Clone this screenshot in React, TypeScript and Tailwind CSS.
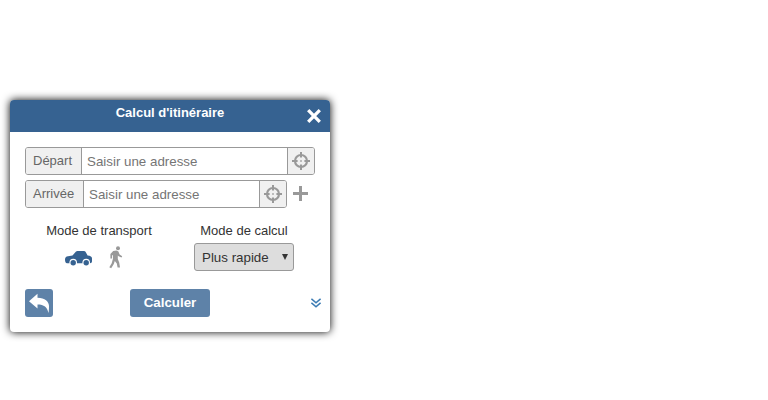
import React from 'react';

function Target() {
  return (
    <svg width="18" height="18" viewBox="0 0 18 18" fill="none" stroke="#999" strokeWidth="2">
      <circle cx="9" cy="9" r="6" strokeWidth="2.2" />
      <path d="M9 0v5.6M9 12.4v5.6M0 9h5.6M12.4 9h5.6" />
      <path d="M8.2 9h1.6" strokeWidth="1.6" />
    </svg>
  );
}

function AddressField({ label, labelClass, inputClass }: { label: string; labelClass: string; inputClass: string }) {
  return (
    <div className="flex h-7 overflow-hidden rounded-[3px] border border-[#999] bg-white">
      <label className={`border-r border-[#999] bg-[#f0f0f0] pl-[7px] leading-[25px] text-[#666] ${labelClass}`}>{label}</label>
      <input
        placeholder="Saisir une adresse"
        className={`min-w-0 pt-px text-[13.33px] outline-none placeholder:text-[#757575] ${inputClass}`}
      />
      <button className="flex w-[27px] shrink-0 items-center justify-center border-l border-[#999] bg-[#f0f0f0]">
        <Target />
      </button>
    </div>
  );
}

function Car() {
  return (
    <svg width="27" height="17" viewBox="0 0 27 17">
      <path
        d="M0 9.5Q0 6.6 3 6.2L7.5 5.6L11 1.4Q11.4 1 12.4 1H19Q20 1 20.5 1.8L22.6 5.6Q27 6 27 8.6V11.4Q27 13.2 25 13.2H2Q0 13.2 0 9.5Z"
        fill="#366291"
      />
      <circle cx="8.2" cy="12.6" r="3.8" fill="#fff" />
      <circle cx="21.2" cy="12.6" r="3.8" fill="#fff" />
      <circle cx="8.2" cy="12.8" r="2.7" fill="#366291" />
      <circle cx="21.2" cy="12.8" r="2.7" fill="#366291" />
    </svg>
  );
}

function Walker() {
  return (
    <svg width="14" height="23" viewBox="0 0 14 23">
      <circle cx="9" cy="2.3" r="2" fill="#999" />
      <path
        d="M4.2 5L7.5 4.4L9.4 5.6L10.6 8.6L13.2 10.2L12.5 11.6L9.6 10.2L8.8 9.4V13L10.2 16.5L11 21.6H8.6L7.8 17.6L5.8 15L4.8 18L2.2 22.2L.3 21.2L2.7 17.2L4 12.5V9L3.1 9.6V12.4H1.4V8Z"
        fill="#999"
      />
    </svg>
  );
}

export default function App() {
  return (
    <main className="h-[400px] bg-white pt-[100px] pl-2.5 font-['Liberation_Sans',Arial,sans-serif] text-[13px] text-[#333]">
      <section className="h-[232px] w-80 rounded-[4px] bg-white shadow-[0_0_8px_#000]">
        <header className="grid h-8 grid-cols-[32px_1fr_32px] rounded-t-[4px] bg-[#366291]">
          <h1 className="col-start-2 pt-px text-center leading-6 font-bold text-white">Calcul d'itinéraire</h1>
          <button className="flex items-center justify-center">
            <svg width="14" height="14" viewBox="0 0 14 14" stroke="#fff" strokeWidth="3.3">
              <path d="M1.2 1.2L12.8 12.8M12.8 1.2L1.2 12.8" />
            </svg>
          </button>
        </header>
        <div className="flex flex-col gap-[5px] px-[15px] pt-[15px]">
          <AddressField label="Départ" labelClass="w-14" inputClass="flex-1 pl-[5px]" />
          <div className="flex">
            <AddressField label="Arrivée" labelClass="w-[58px]" inputClass="w-[175px] pl-[5px]" />
            <button className="flex w-7 items-start pt-1.5 pl-1.5">
              <svg width="15" height="15" viewBox="0 0 15 15" stroke="#999" strokeWidth="3">
                <path d="M7.5 0V15M0 7.5H15" />
              </svg>
            </button>
          </div>
        </div>
        <div className="flex pt-[15px] pl-[15px]">
          <div className="w-[148px] text-center">
            <div className="leading-4">Mode de transport</div>
            <div className="flex h-[30px] gap-[17px] pt-[7px] pl-10">
              <div className="pt-1"><Car /></div>
              <Walker />
            </div>
          </div>
          <div className="w-[142px] text-center">
            <div className="leading-4">Mode de calcul</div>
            <button className="mx-auto mt-1 flex h-7 w-[100px] items-center justify-between rounded-[3px] border border-[#999] bg-[#ddd] pt-px pr-[5px] pl-[7px] text-[13.33px]">
              Plus rapide
              <svg width="6" height="6" viewBox="0 0 6 6" fill="#333" className="mb-px">
                <path d="M0 0H6L3 6Z" />
              </svg>
            </button>
          </div>
        </div>
        <footer className="flex items-center pt-[18px] pl-[15px]">
          <button className="flex h-7 w-7 items-center justify-center rounded-[3px] bg-[#5e82a8]">
            <svg width="20" height="20" viewBox="0 0 20 20" fill="#fff">
              <path d="M0 8.2L8.5 .8V4.8C16 4.8 20 9 20 13C20 15.5 19.9 18 19.4 20C18.4 14 15 11.4 8.5 11.4V15.4Z" />
            </svg>
          </button>
          <button className="ml-[77px] h-7 w-20 rounded-[3px] bg-[#5e82a8] pb-px text-[13.33px] font-bold text-white">Calculer</button>
          <button className="ml-[101px]">
            <svg width="10" height="10" viewBox="0 0 10 10" fill="none" stroke="#3c7cb4" strokeWidth="1.6">
              <path d="M.4 .8L5 4.8L9.6 .8M.4 4.8L5 8.8L9.6 4.8" />
            </svg>
          </button>
        </footer>
      </section>
    </main>
  );
}
